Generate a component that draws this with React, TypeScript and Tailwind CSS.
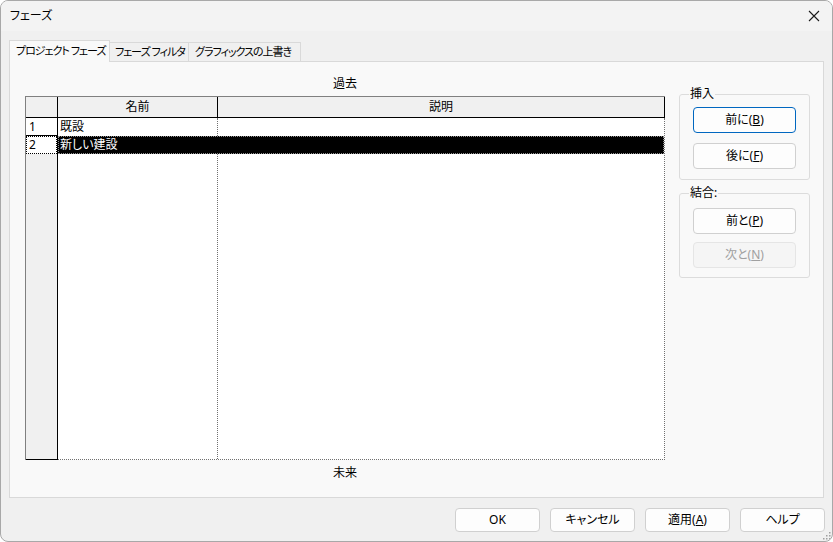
const font = "font-['Noto_Sans','Noto_Sans_CJK_JP',sans-serif] [font-feature-settings:'palt']";

function Btn({
  children,
  focused,
  disabled,
  className = "",
}: {
  children: React.ReactNode;
  focused?: boolean;
  disabled?: boolean;
  className?: string;
}) {
  const tone = disabled
    ? "border-[#e5e5e5] bg-[#f5f5f5] text-[#a0a0a0]"
    : focused
      ? "border-[#0067c0] bg-[#fdfdfd] text-black"
      : "border-[#d0d0d0] bg-[#fdfdfd] text-black";
  return (
    <div
      className={`flex items-center justify-center rounded-[4px] border text-[12px] leading-none ${tone} ${className}`}
    >
      {children}
    </div>
  );
}

function Group({
  label,
  children,
  inner,
  className = "",
}: {
  label: string;
  children: React.ReactNode;
  inner: string;
  className?: string;
}) {
  return (
    <fieldset className={`rounded-[3px] border border-[#dcdcdc] px-[13px] ${className}`}>
      <legend className="-ml-[4px] px-[1px] text-[12px] leading-[16px]">{label}</legend>
      <div className={`flex flex-col ${inner}`}>{children}</div>
    </fieldset>
  );
}

function PhaseGrid() {
  return (
    <div className="flex h-[364px] w-[640px] flex-col border-l border-t border-[#808080] bg-white text-[12px]">
      {/* header */}
      <div className="flex h-[21px]">
        <div className="w-[32px] border-b border-r border-black bg-[#f0f0f0]" />
        <div className="flex w-[160px] items-center justify-center border-b border-r border-black bg-[#f0f0f0]">
          名前
        </div>
        <div className="flex flex-1 items-center justify-center border-b border-r border-black bg-[#f0f0f0]">
          説明
        </div>
      </div>
      <div className="flex flex-1">
        {/* row headers */}
        <div className="flex w-[32px] flex-col border-b border-r border-black bg-[#f0f0f0]">
          <div className="flex h-[18px] items-center border-b border-black bg-white pl-[3px]">1</div>
          <div className="flex h-[18px] items-center border border-dotted border-black bg-white pl-[2px]">2</div>
        </div>
        {/* cells */}
        <div className="flex flex-1 flex-col border-b border-r border-dotted border-[#707070]">
          <div className="flex h-[18px]">
            <div className="flex w-[160px] items-center border-r border-dotted border-[#707070] pl-[2px]">既設</div>
            <div className="flex-1" />
          </div>
          <div className="flex h-[18px] items-center border border-dotted border-[#909090] bg-black pl-[1px] text-white">
            新しい建設
          </div>
          <div className="flex flex-1">
            <div className="w-[160px] border-r border-dotted border-[#707070]" />
            <div className="flex-1" />
          </div>
        </div>
      </div>
    </div>
  );
}

export default function App() {
  return (
    <div className={`h-[542px] w-[833px] bg-white ${font}`}>
      <div className="relative flex h-full w-full flex-col overflow-hidden rounded-[8px] border border-[#a8a8a8] bg-[#f0f0f0] text-[12px] text-black">
        {/* title bar */}
        <div className="flex h-[30px] items-center justify-between bg-[#f3f3f3] pl-[9px] pr-[9px]">
          <span className="text-[12px]">フェーズ</span>
          <svg width="12" height="12" viewBox="0 0 12 12" className="mr-[3px]">
            <path d="M1 1L11 11M11 1L1 11" stroke="#1a1a1a" strokeWidth="1.1" />
          </svg>
        </div>

        <div className="flex flex-1 flex-col px-[8px] pt-[9px]">
          {/* tabs */}
          <div className="flex h-[21px] items-end whitespace-nowrap text-[11px] tracking-[-1px]">
            <div className="relative z-10 -mb-px flex h-[22px] w-[101px] items-center border border-b-0 border-[#d9d9d9] bg-[#f9f9f9] pl-[6px]">
              プロジェクト フェーズ
            </div>
            <div className="-ml-px flex h-[19px] w-[80px] items-center border border-b-0 border-[#d9d9d9] bg-[#f0f0f0] pl-[5px]">
              フェーズ フィルタ
            </div>
            <div className="-ml-px flex h-[19px] w-[113px] items-center border border-b-0 border-[#d9d9d9] bg-[#f0f0f0] pl-[6px]">
              グラフィックスの上書き
            </div>
          </div>

          {/* panel */}
          <div className="flex flex-1 border border-[#d9d9d9] bg-[#f9f9f9] pl-[15px]">
            <div className="flex w-[640px] flex-col">
              <div className="mb-[4px] mt-[14px] h-[16px] text-center leading-[16px]">過去</div>
              <PhaseGrid />
              <div className="mt-[5px] h-[16px] text-center leading-[16px]">未来</div>
            </div>
            <div className="ml-[14px] mt-[24px] flex w-[130px] flex-col gap-[5px]">
              <Group label="挿入" inner="gap-[10px] pt-[5px]" className="pb-[10px]">
                <Btn focused className="h-[26px] w-[103px]">
                  前に(<u>B</u>)
                </Btn>
                <Btn className="h-[26px] w-[103px]">
                  後に(<u>F</u>)
                </Btn>
              </Group>
              <Group label="結合:" inner="gap-[8px] pt-[7px]" className="pb-[9px]">
                <Btn className="h-[26px] w-[103px]">
                  前と(<u>P</u>)
                </Btn>
                <Btn disabled className="h-[26px] w-[103px]">
                  次と(<u>N</u>)
                </Btn>
              </Group>
            </div>
          </div>
        </div>

        {/* footer buttons */}
        <div className="flex h-[43px] items-start justify-end gap-[10px] pr-[7px] pt-[10px]">
          <Btn className="h-[24px] w-[85px]">OK</Btn>
          <Btn className="h-[24px] w-[85px]">キャンセル</Btn>
          <Btn className="h-[24px] w-[85px]">
            適用(<u>A</u>)
          </Btn>
          <Btn className="h-[24px] w-[85px]">ヘルプ</Btn>
        </div>

        {/* resize grip */}
        <svg width="10" height="10" viewBox="0 0 10 10" className="absolute bottom-[1px] right-[1px]">
          {[
            [8, 2],
            [5, 5],
            [8, 5],
            [2, 8],
            [5, 8],
            [8, 8],
          ].map(([x, y], i) => (
            <rect key={i} x={x} y={y} width="1.5" height="1.5" fill="#a0a0a0" />
          ))}
        </svg>
      </div>
    </div>
  );
}
